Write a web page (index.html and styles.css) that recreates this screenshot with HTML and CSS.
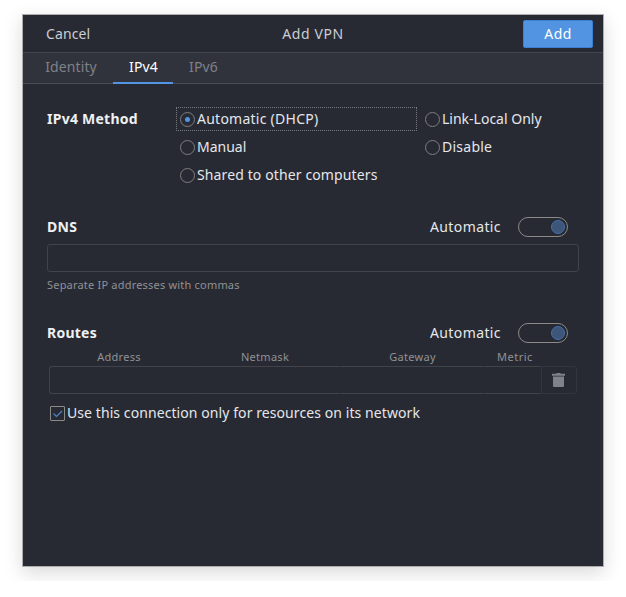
FILE: index.html
```
<!DOCTYPE html>
<html lang="en">
<head>
<meta charset="utf-8">
<title>Add VPN</title>
<link rel="stylesheet" href="styles.css">
</head>
<body>
<main class="window">
  <header class="titlebar">
    <button class="cancel">Cancel</button>
    <h1 class="title">Add VPN</h1>
    <button class="add">Add</button>
  </header>
  <nav class="tabs">
    <a class="tab tab-identity">Identity</a>
    <a class="tab active">IPv4</a>
    <a class="tab">IPv6</a>
  </nav>
  <div class="content">
    <section class="method">
      <h2 class="heading method-heading">IPv4 Method</h2>
      <div class="options">
        <label class="option focused"><span class="radio checked"></span><span class="wide">Automatic (DHCP)</span></label>
        <label class="option"><span class="radio"></span><span class="plain">Link-Local Only</span></label>
        <label class="option"><span class="radio"></span><span class="plain">Manual</span></label>
        <label class="option"><span class="radio"></span><span class="wide">Disable</span></label>
        <label class="option"><span class="radio"></span><span>Shared to other computers</span></label>
      </div>
    </section>
    <section class="dns">
      <div class="row">
        <h2 class="heading">DNS</h2>
        <span class="auto">Automatic</span>
        <span class="switch"><span class="knob"></span></span>
      </div>
      <div class="entry"></div>
      <p class="hint">Separate IP addresses with commas</p>
    </section>
    <section class="routes">
      <div class="row">
        <h2 class="heading">Routes</h2>
        <span class="auto">Automatic</span>
        <span class="switch"><span class="knob"></span></span>
      </div>
      <div class="columns">
        <span>Address</span><span>Netmask</span><span>Gateway</span><span class="metric">Metric</span>
      </div>
      <div class="route">
        <div class="cell"></div><div class="cell"></div><div class="cell"></div><div class="cell"></div>
        <button class="delete" aria-label="Delete">
          <svg width="13" height="14" viewBox="0 0 13 14"><path d="M4.500 0h4v.8H13v1.900H0V.8h4.500zM1 3.500h11V13a1 1 0 0 1-1 1H2a1 1 0 0 1-1-1z"/></svg>
        </button>
      </div>
      <label class="only">
        <span class="check"><svg width="13" height="13" viewBox="0 0 13 13"><path d="M2.500 6.500l3 3 5.500-5.500"/></svg></span>
        <span>Use this connection only for resources on its network</span>
      </label>
    </section>
  </div>
</main>
</body>
</html>
```
FILE: styles.css
```
* { box-sizing: border-box; }

body {
  margin: 0;
  padding: 14px 22px;
  background: #fff;
  color: #e4e7eb;
  font: 14px/20px "Noto Sans", sans-serif;
  letter-spacing: 0.12px;
}

h1, h2, p { margin: 0; font-size: inherit; font-weight: normal; }

button { font: inherit; letter-spacing: inherit; color: inherit; padding: 0; border: 0; background: none; }

.window {
  width: 582px;
  height: 553px;
  border: 1px solid #adadae;
  background: #282a33;
  box-shadow: 0 6px 18px rgba(0, 0, 0, 0.15);
}

.titlebar {
  display: grid;
  grid-template-columns: 90px 1fr 70px;
  align-items: center;
  height: 38px;
  padding-right: 10px;
  border-bottom: 1px solid #42454d;
  color: #c9cdd4;
}

.cancel { text-align: left; padding-left: 23px; }

.title { text-align: center; letter-spacing: 0.6px; padding-right: 10px; }

.add {
  height: 28px;
  border: 1px solid #3b80d5;
  border-radius: 2px;
  background: #5294e2;
  color: #fff;
  letter-spacing: 0.4px;
}

.tabs {
  display: flex;
  height: 31px;
  padding-left: 6px;
  background: #31333c;
  border-bottom: 1px solid #4a4c54;
}

.tab {
  width: 60px;
  height: 31px;
  padding: 4px 0 0 1px;
  text-align: center;
  color: #7e8188;
}

.tab-identity { width: 84px; padding-left: 0; }

.active { color: #fff; border-bottom: 2px solid #5294e2; }

.content { padding: 23px 24px 0; }

.heading { flex: 1; font-weight: bold; letter-spacing: 0.25px; color: #eef0f2; }

.method { display: flex; height: 84px; }

.method-heading { flex: 0 0 129px; padding-top: 2px; }

.options {
  display: grid;
  grid-template-columns: 241px 1fr;
  grid-auto-rows: 24px;
  gap: 4px;
  white-space: nowrap;
}

.option { display: flex; align-items: center; gap: 2px; padding-left: 4px; }

.focused { border: 1px dotted #777a80; padding-left: 3px; }

.wide { letter-spacing: 0.25px; }

.plain { letter-spacing: 0; }

.radio {
  display: grid;
  place-items: center;
  width: 15px;
  height: 15px;
  border: 1px solid #7e7e7f;
  border-radius: 50%;
}

.checked::after { content: ""; width: 5px; height: 5px; border-radius: 50%; background: #5294e2; }

.dns { margin-top: 26px; }

.row { display: flex; align-items: center; height: 20px; }

.auto { letter-spacing: 0.4px; margin-right: 17px; }

.switch {
  display: flex;
  justify-content: flex-end;
  align-items: center;
  width: 50px;
  height: 20px;
  margin-right: 11px;
  padding-right: 2px;
  border: 1px solid #8a8a89;
  border-radius: 10px;
}

.knob { width: 14px; height: 14px; border: 1px solid #4471ab; border-radius: 50%; background: #3d567a; }

.entry { height: 28px; margin-top: 7px; border: 1px solid #41434b; border-radius: 3px; }

.hint { margin-top: 5px; font-size: 11px; line-height: 16px; letter-spacing: 0.2px; color: #8f9195; }

.routes { margin-top: 30px; }

.columns {
  display: grid;
  grid-template-columns: 144px 148px 147px 57px;
  margin-top: 6px;
  font-size: 11px;
  line-height: 16px;
  letter-spacing: 0.3px;
  text-align: center;
  color: #8f9195;
}

.metric { letter-spacing: 0.5px; padding-left: 1px; }

.route { display: grid; grid-template-columns: 146px 145px 145px 56px 36px; height: 28px; margin: 1px 2px 0; }

.cell { border: 1px solid #41434b; border-width: 1px 1px 1px 0; border-right-color: transparent; }

.cell:first-child { border-left-width: 1px; border-radius: 3px 0 0 3px; }

.delete {
  display: grid;
  place-items: center;
  border: 1px solid #33353e;
  border-radius: 0 3px 3px 0;
  fill: #7f8289;
}

.delete svg { margin-right: 1px; }

.only { display: flex; align-items: center; gap: 2px; height: 20px; margin: 9px 0 0 3px; letter-spacing: 0.08px; }

.check { display: flex; width: 15px; height: 15px; border: 1px solid #8a8a89; border-radius: 1px; }

.check path { fill: none; stroke: #5294e2; stroke-width: 1.2; opacity: 0.85; }
```
